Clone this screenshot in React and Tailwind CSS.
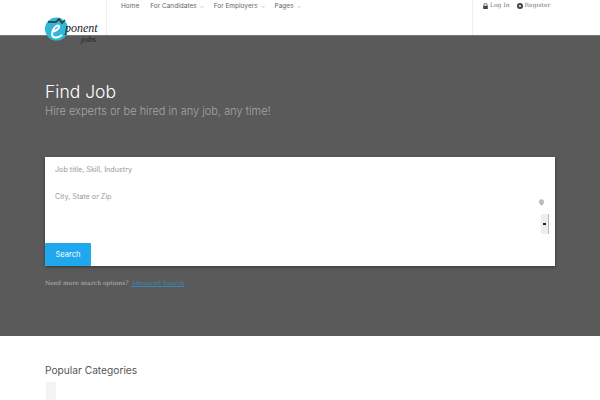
import { ChevronDown, MapPin } from "lucide-react";

const navLinks = [
    { label: "Home", className: "mr-[2px]" },
    { label: "For Candidates", caret: true },
    { label: "For Employers", caret: true },
    { label: "Pages", caret: true },
];

const Logo = () => (
    <div className="absolute left-[45px] top-[17px] z-10 h-[30px] w-[55px]">
        <svg width="26" height="26" viewBox="0 0 26 26" className="absolute left-0 top-0">
            <circle cx="11.5" cy="12" r="11.5" fill="#2fb8d8" />
            <path d="M3 5 L11 5 L14 2 L17 6 L20 3" fill="none" stroke="#333" strokeWidth="1.5" />
            <path d="M7 15 C11 14 15 11 14 9 C12 7 7 12 7 17 C7 21 12 22 17 18" fill="none" stroke="#fff" strokeWidth="2" />
        </svg>
        <span className="absolute left-[20px] top-[5px] font-['Liberation_Serif',serif] text-[12px] italic leading-none text-[#222]">
            ponent
        </span>
        <span className="absolute left-[36px] top-[18px] font-['Liberation_Serif',serif] text-[9px] italic leading-none text-[#222]">
            jobs
        </span>
    </div>
);

const Header = () => (
    <header className="flex h-[35px] bg-white">
        <div className="w-[107px] shrink-0 border-r border-[#eeeeee]" />
        <nav className="flex h-[13px] flex-1 items-center gap-[9px] pl-[14px] font-['Inter',sans-serif] text-[6.5px] text-[#666]">
            {navLinks.map((link) => (
                <span key={link.label} className={`flex items-center gap-[2px] ${link.className ?? ""}`}>
                    {link.label}
                    {link.caret && <ChevronDown size={6} className="text-[#aaa]" />}
                </span>
            ))}
        </nav>
        <div className="flex h-full w-[128px] shrink-0 items-start gap-[7px] border-l border-[#eeeeee] pl-[10px] pt-[2px] font-['DejaVu_Serif',serif] text-[6px] leading-[8px] text-[#777] [text-rendering:geometricPrecision]">
            <span className="flex items-center gap-[2px]">
                <svg width="5" height="6" viewBox="0 0 5 6" className="shrink-0">
                    <path d="M1 3V1.8a1.5 1.5 0 0 1 3 0V3" fill="none" stroke="#444" strokeWidth="0.8" />
                    <rect x="0.2" y="2.8" width="4.6" height="3.2" fill="#444" />
                </svg>
                Log In
            </span>
            <span className="flex items-center gap-[2px]">
                <span className="h-[6px] w-[6px] rounded-full border-2 border-[#444]" />
                Register
            </span>
        </div>
    </header>
);

const SearchBox = () => (
    <div className="flex h-[109px] w-[510px] flex-col bg-white shadow-[0_1px_3px_rgba(0,0,0,0.4)]">
        <div className="flex-1 px-[10px] pt-[8px] font-['Inter',sans-serif] text-[7.2px] text-[#999]">
            <p className="h-[27px] leading-[10px]">Job title, Skill, Industry</p>
            <p className="leading-[10px]">City, State or Zip</p>
            <div className="-mt-[3px] flex flex-col items-end">
                <MapPin size={7} className="fill-[#bbb] text-[#bbb]" />
                <div className="mr-[-4px] mt-[8px] flex h-[20px] w-[8px] items-center justify-center border-r border-[#bbb] bg-[#eee]">
                    <span className="h-[2px] w-[3px] bg-[#222]" />
                </div>
            </div>
        </div>
        <button className="h-[23px] w-[46px] rounded-[1px] bg-[#1fa8ee] font-['Inter',sans-serif] text-[7.5px] text-white">
            Search
        </button>
    </div>
);

export default function App() {
    return (
        <div className="relative h-[400px] w-[600px] overflow-hidden bg-white">
            <Logo />
            <Header />

            <section className="h-[301px] border-t border-[#777] bg-[#5a5a5a] pl-[45px] pt-[46px]">
                <h1 className="font-['Inter',sans-serif] text-[17.5px] font-light leading-[20px] text-white">
                    Find Job
                </h1>
                <p className="mt-[1px] font-['Inter',sans-serif] text-[11px] font-light leading-[16px] text-[#a5a5a5]">
                    Hire experts or be hired in any job, any time!
                </p>

                <div className="mt-[38px]">
                    <SearchBox />
                </div>

                <p className="mt-[13px] font-['DejaVu_Serif',serif] text-[6px] leading-[10px] text-[#b5b5b5] [text-rendering:geometricPrecision]">
                    Need more search options?{" "}
                    <span className="ml-[1px] text-[#3c86b5] underline">Advanced Search</span>
                </p>
            </section>

            <section className="pl-[45px] pt-[27px]">
                <h2 className="font-['Inter',sans-serif] text-[10.2px] leading-[14px] text-[#555]">
                    Popular Categories
                </h2>
                <div className="ml-[1px] mt-[5px] h-[30px] w-[10px] bg-[#f4f4f4]" />
            </section>
        </div>
    );
}
